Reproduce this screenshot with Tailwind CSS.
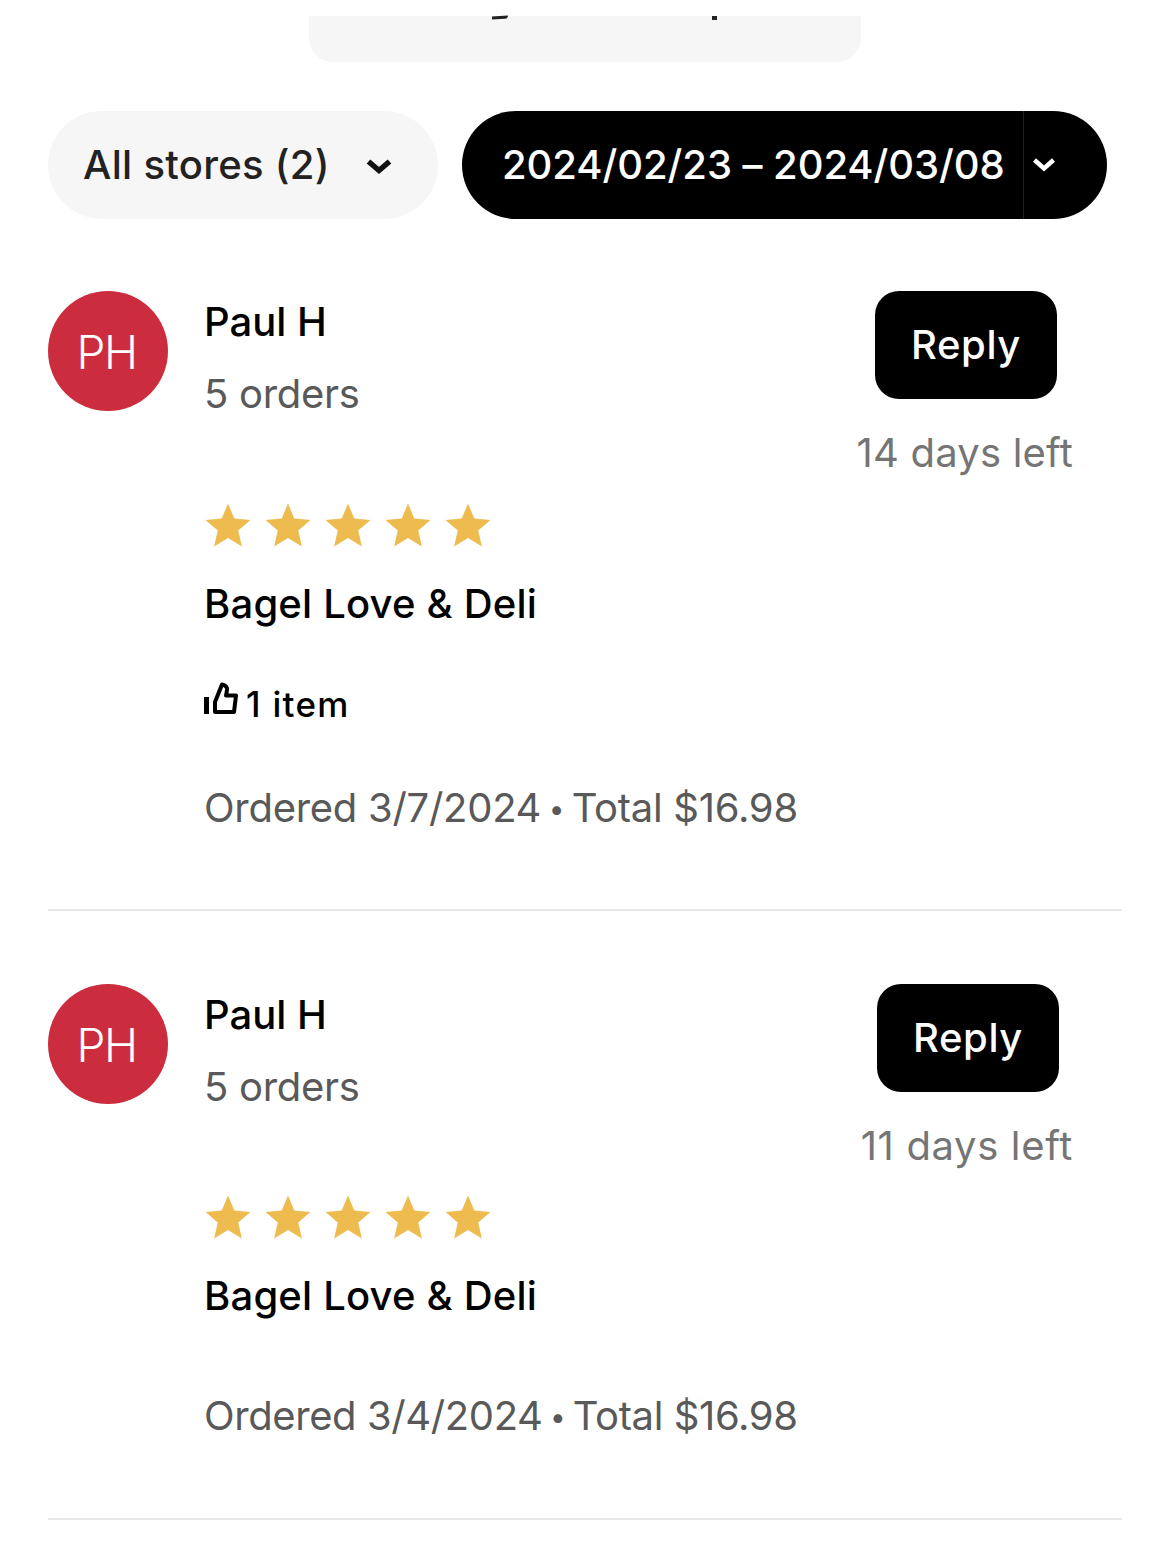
<!DOCTYPE html>
<html lang="en">
  <head>
    <script src="https://cdn.jsdelivr.net/npm/@tailwindcss/browser@4"></script>
    <meta charset="UTF-8" />
    <title>Customer reviews</title>
  </head>
  <body class="bg-white font-['Inter',sans-serif] text-black w-[1170px] h-[1562px] overflow-hidden">
    <svg class="hidden">
      <symbol id="star" viewBox="0 0 46 44">
        <path d="M23 0.5 L29.3 15.6 L45.5 16.9 L33.2 27.5 L36.9 43.5 L23 35 L9.1 43.5 L12.8 27.5 L0.5 16.9 L16.7 15.6 Z" fill="#edbb4e" />
      </symbol>
    </svg>

    <div class="pt-4 flex justify-center">
      <div class="relative w-[552px] h-[46px] bg-[#f6f6f6] rounded-b-[24px]">
        <div class="absolute left-[183px] top-0 w-[16px] h-[3px] bg-[#222] rounded-br-full rounded-bl-[6px] -rotate-3"></div>
        <div class="absolute left-[403px] top-0 w-[5px] h-[4px] bg-[#222]"></div>
      </div>
    </div>

    <div class="flex gap-6 pl-12 mt-[49px]">
      <div class="w-[390px] h-[108px] rounded-full bg-[#f6f6f6] flex items-center pl-[35px] text-[40px] font-medium text-[#222]">
        <span class="tracking-[0.3px]">All stores (2)</span>
        <svg class="ml-[36px] mt-[3px]" width="26" height="20" viewBox="0 0 26 20"><path d="M2.5 4.5 L13 13.5 L23.5 4.5" fill="none" stroke="#111" stroke-width="5.5" /></svg>
      </div>
      <div class="flex h-[108px] text-white">
        <div class="w-[561px] rounded-l-full rounded-r-[10px] bg-black flex items-center pl-[40px] text-[40px] font-medium">
          <span class="tracking-[-0.06px]">2024/02/23 – 2024/03/08</span>
        </div>
        <div class="w-[84px] rounded-r-full bg-black flex items-center pl-[8px] border-l border-[#222]">
          <svg width="24" height="16" viewBox="0 0 24 16"><path d="M2.5 3 L12 11.5 L21.5 3" fill="none" stroke="#fff" stroke-width="4.5" /></svg>
        </div>
      </div>
    </div>

    <div class="mx-12 mt-[72px] h-[620px] border-b-2 border-[#e8e8e8] flex justify-between">
      <div class="flex">
        <div class="w-[120px] h-[120px] rounded-full bg-[#cb2d3e] text-white text-[46px] font-light tracking-[-1.5px] pt-[2px] pr-[3px] flex items-center justify-center shrink-0">PH</div>
        <div class="ml-[36px] pt-[5px]">
          <p class="text-[40px] leading-[52px] font-medium">Paul H</p>
          <p class="mt-[20px] text-[40px] leading-[52px] text-[#595959] tracking-[-0.3px]">5 orders</p>
          <div class="mt-[83px] ml-[1px] flex gap-[14px] h-[44px]">
            <svg width="46" height="44"><use href="#star" /></svg>
            <svg width="46" height="44"><use href="#star" /></svg>
            <svg width="46" height="44"><use href="#star" /></svg>
            <svg width="46" height="44"><use href="#star" /></svg>
            <svg width="46" height="44"><use href="#star" /></svg>
          </div>
          <p class="mt-[31px] text-[40px] leading-[52px] font-medium tracking-[0.2px]">Bagel Love &amp; Deli</p>
          <div class="mt-[52px] flex items-center h-[44px]">
            <svg width="36" height="36" viewBox="0 0 36 36" class="-mt-[11px] -ml-[1px] shrink-0">
              <path d="M1 16 H6 V33 H1 Z" fill="#000" />
              <path d="M12 31 V21 L19 3.5 C23 4 24.5 7 24 9 L23 14.5 H33 L31 31 Z" fill="none" stroke="#000" stroke-width="4" stroke-linejoin="round" />
            </svg>
            <span class="ml-[7px] text-[35px] font-medium tracking-[1.3px]">1 item</span>
          </div>
          <p class="mt-[56px] text-[40px] leading-[52px] text-[#595959] tracking-[-0.28px]">Ordered 3/7/2024<span class="text-[28px] align-[3px] mx-[7.5px]">•</span>Total $16.98</p>
        </div>
      </div>
      <div class="flex flex-col items-end pr-[49px]">
        <div class="w-[182px] h-[108px] mr-[16px] rounded-[24px] bg-black text-white text-[40px] font-medium flex items-center justify-center tracking-[0.6px]">Reply</div>
        <p class="mt-[28px] text-[40px] leading-[52px] text-[#757575] tracking-[0.2px]">14 days left</p>
      </div>
    </div>

    <div class="mx-12 mt-[73px] h-[536px] border-b-2 border-[#e8e8e8] flex justify-between">
      <div class="flex">
        <div class="w-[120px] h-[120px] rounded-full bg-[#cb2d3e] text-white text-[46px] font-light tracking-[-1.5px] pt-[2px] pr-[3px] flex items-center justify-center shrink-0">PH</div>
        <div class="ml-[36px] pt-[5px]">
          <p class="text-[40px] leading-[52px] font-medium">Paul H</p>
          <p class="mt-[20px] text-[40px] leading-[52px] text-[#595959] tracking-[-0.3px]">5 orders</p>
          <div class="mt-[82px] ml-[1px] flex gap-[14px] h-[44px]">
            <svg width="46" height="44"><use href="#star" /></svg>
            <svg width="46" height="44"><use href="#star" /></svg>
            <svg width="46" height="44"><use href="#star" /></svg>
            <svg width="46" height="44"><use href="#star" /></svg>
            <svg width="46" height="44"><use href="#star" /></svg>
          </div>
          <p class="mt-[31px] text-[40px] leading-[52px] font-medium tracking-[0.2px]">Bagel Love &amp; Deli</p>
          <p class="mt-[68px] text-[40px] leading-[52px] text-[#595959] tracking-[-0.4px]">Ordered 3/4/2024<span class="text-[28px] align-[3px] mx-[7.5px]">•</span>Total $16.98</p>
        </div>
      </div>
      <div class="flex flex-col items-end pr-[49px]">
        <div class="w-[182px] h-[108px] mr-[14px] rounded-[24px] bg-black text-white text-[40px] font-medium flex items-center justify-center tracking-[0.6px]">Reply</div>
        <p class="mt-[28px] text-[40px] leading-[52px] text-[#757575] tracking-[0.65px]">11 days left</p>
      </div>
    </div>
  </body>
</html>
